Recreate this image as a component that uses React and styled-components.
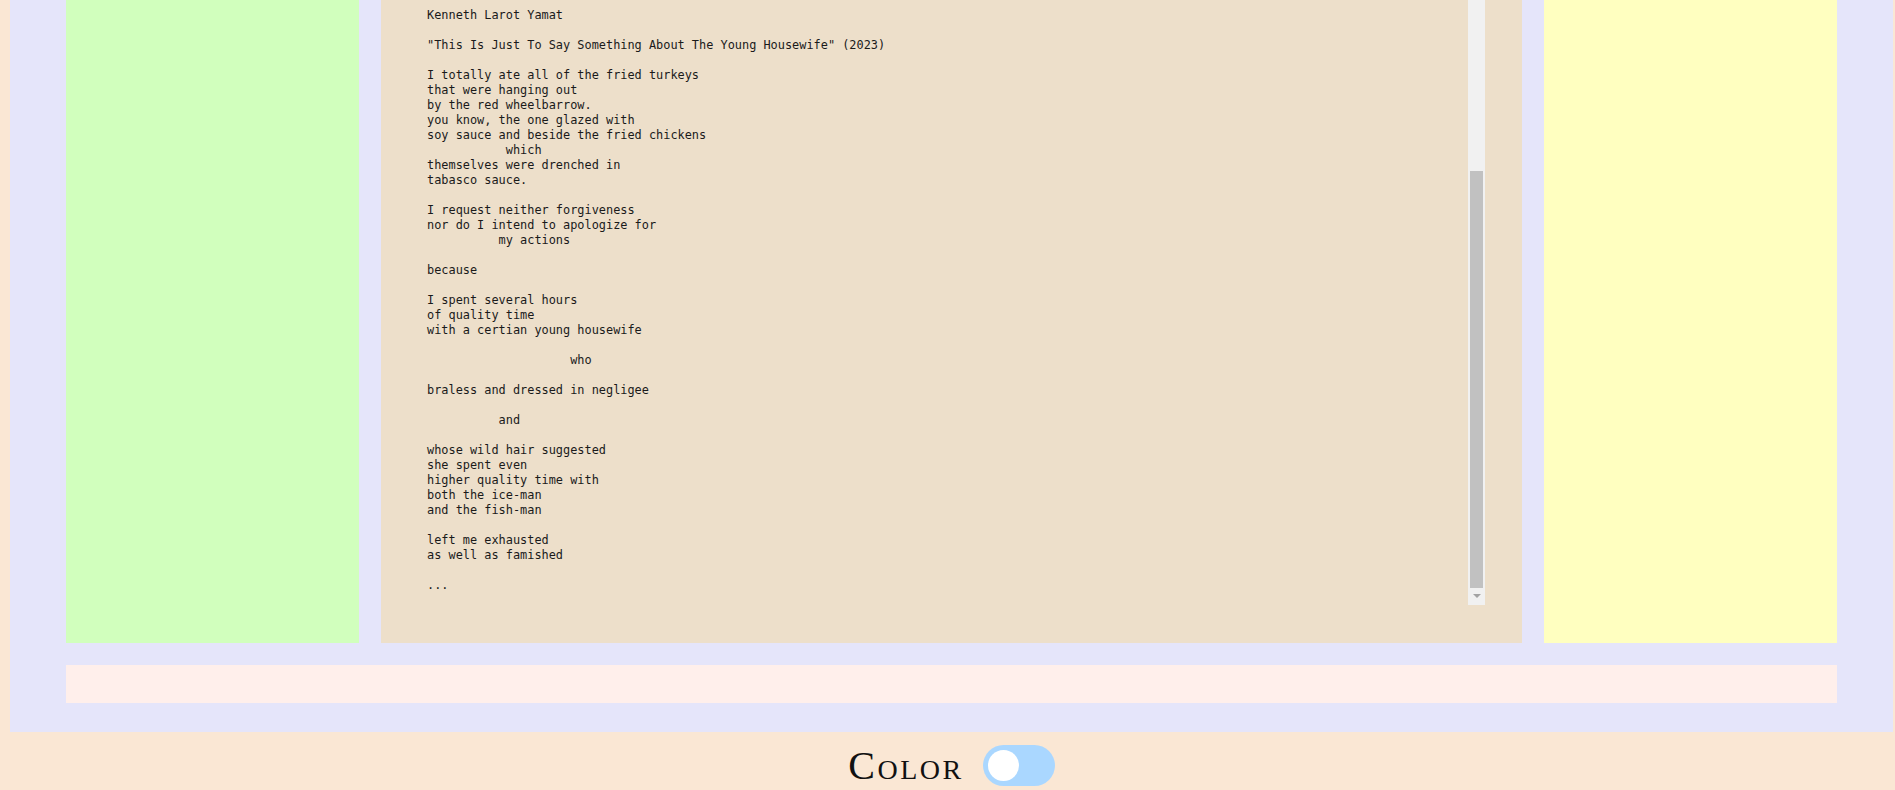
import { useLayoutEffect, useRef, useState } from 'react';
import styled, { createGlobalStyle } from 'styled-components';

const poem = `Kenneth Larot Yamat

"This Is Just To Say Something About The Young Housewife" (2023)

I totally ate all of the fried turkeys
that were hanging out
by the red wheelbarrow.
you know, the one glazed with
soy sauce and beside the fried chickens
           which
themselves were drenched in
tabasco sauce.

I request neither forgiveness
nor do I intend to apologize for
          my actions

because

I spent several hours
of quality time
with a certian young housewife

                    who

braless and dressed in negligee

          and

whose wild hair suggested
she spent even
higher quality time with
both the ice-man
and the fish-man

left me exhausted
as well as famished

...`;

export default function App(){
    const boxRef = useRef(null)
    const [color, setColor] = useState(false)

    // the reader sits scrolled to the end of the poem
    useLayoutEffect(()=>{
        const el = boxRef.current
        if(el) el.scrollTop = el.scrollHeight
    },[])

    return(
        <>
        <Global/>
        <Frame>
            <Columns>
                <Side tone="#d1ffbd"/>
                <Reader>
                    <Poem ref={boxRef}>{poem}</Poem>
                    <Rail>
                        <Track/>
                        <Thumb/>
                        <ArrowDown><Triangle/></ArrowDown>
                    </Rail>
                </Reader>
                <Side tone="#ffffc0"/>
            </Columns>
            <Band/>
        </Frame>
        <ToggleRow>
            <Label>Color</Label>
            <Switch type="button" on={color ? 1 : 0} onClick={()=>setColor(!color)}>
                <Knob on={color ? 1 : 0}/>
            </Switch>
        </ToggleRow>
        </>
    )
}

const Global = createGlobalStyle`
html, body{
    margin: 0;
    background: #fae7d4;
    overflow: hidden;
}
`

const Frame = styled.div`
margin: 0 2px 0 10px;
padding: 0 56px 29px;
background: #e5e5fa;
`

const Columns = styled.div`
display: grid;
grid-template-columns: 293px 1fr 293px;
gap: 22px;
height: 643px;
`

const Side = styled.div`
background: ${p => p.tone};
`

const Reader = styled.div`
display: flex;
background: #eddfca;
padding: 0 37px 38px;
min-height: 0;
`

const Poem = styled.pre`
flex: 1;
box-sizing: border-box;
height: 100%;
margin: 0;
padding: 256px 0 12px 9px;
overflow: hidden;
font-family: "DejaVu Sans Mono", monospace;
font-size: 11.9px;
line-height: 15px;
color: #1a1a1a;
`

const Rail = styled.div`
display: flex;
flex-direction: column;
width: 17px;
background: #f1f1f1;
`

const Track = styled.div`
flex: 1;
`

const Thumb = styled.div`
height: 417px;
margin: 0 2px;
background: #c1c1c1;
`

const ArrowDown = styled.div`
display: flex;
justify-content: center;
height: 17px;
padding-top: 6px;
box-sizing: border-box;
`

const Triangle = styled.span`
width: 0;
height: 0;
border-left: 4px solid transparent;
border-right: 4px solid transparent;
border-top: 4px solid #a3a3a3;
`

const Band = styled.div`
height: 38px;
margin-top: 22px;
background: #ffefeb;
`

const ToggleRow = styled.div`
display: flex;
justify-content: center;
align-items: center;
gap: 19px;
padding: 13px 0 4px 8px;
`

const Label = styled.span`
font-family: "Liberation Serif", serif;
font-variant: small-caps;
font-size: 40px;
letter-spacing: 2.5px;
line-height: 41px;
color: #111;
`

const Switch = styled.button`
position: relative;
width: 72px;
height: 41px;
padding: 0;
border: none;
border-radius: 21px;
background: ${p => p.on ? '#6fb8f5' : '#aad7ff'};
cursor: pointer;
`

const Knob = styled.span`
position: absolute;
top: 5px;
left: ${p => p.on ? '36px' : '5px'};
width: 31px;
height: 31px;
border-radius: 50%;
background: white;
`
